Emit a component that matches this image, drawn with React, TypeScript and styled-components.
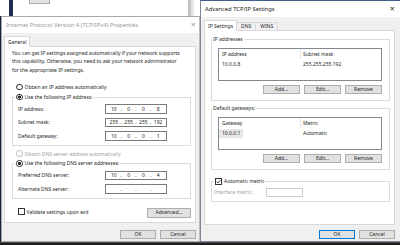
import React from 'react';
import styled, { createGlobalStyle } from 'styled-components';

const GlobalStyle = createGlobalStyle`
  html, body {
    margin: 0;
    padding: 0;
    background: #14233b;
  }
  body {
    font-family: 'Noto Sans', 'Liberation Sans', sans-serif;
    font-size: 5px;
    color: #262626;
  }
  * {
    box-sizing: border-box;
  }
`;

const Screen = styled.div`
  width: 400px;
  height: 245px;
  overflow: hidden;
  display: flex;
  flex-direction: column;
  background: #14233b;
`;

const Desktop = styled.div`
  flex: 1;
  min-height: 0;
  display: flex;
`;

const Taskbar = styled.div`
  height: 3px;
  background: #1e1e1e;
  border-top: 1px solid #4a4a4a;
`;

const LeftColumn = styled.div`
  width: 200px;
  display: flex;
  flex-direction: column;
`;

// the window peeking out behind the IPv4 dialog
const BackWindow = styled.div`
  height: 16px;
  display: flex;
  background: #fff;
`;

const BackEdge = styled.div<{ $width: number; $color: string }>`
  width: ${p => p.$width}px;
  background: ${p => p.$color};
`;

const BackPane = styled.div`
  flex: 1;
  padding-left: 16px;
`;

const BackButton = styled.div`
  width: 21px;
  height: 4px;
  background: #e1e1e1;
  border: 1px solid #adadad;
  border-top: none;
`;

const DialogSlot = styled.div`
  flex: 1;
  min-height: 0;
  display: flex;
  padding-left: 1px;
`;

const Window = styled.div<{ $active?: boolean; $width?: number }>`
  ${p => (p.$width ? `width: ${p.$width}px;` : 'flex: 1;')}
  min-height: 0;
  display: flex;
  flex-direction: column;
  background: #f0f0f0;
  border: 1px solid ${p => (p.$active ? '#7d8796' : '#a9a9a9')};
  border-right: ${p => (p.$active ? 'none' : '1px solid #bdbdbd')};
  border-top-color: ${p => (p.$active ? '#3d5f8c' : '#a9a9a9')};
`;

const TitleBar = styled.div<{ $active?: boolean; $closeInset: number }>`
  height: 16px;
  flex-shrink: 0;
  display: flex;
  align-items: center;
  justify-content: space-between;
  padding: 0 ${p => p.$closeInset}px 0 4px;
  background: #fff;
  font-size: 5.8px;
  color: ${p => (p.$active ? '#1a1a1a' : '#9a9a9a')};
`;

const CloseGlyph = styled.span`
  font-family: 'DejaVu Sans', sans-serif;
  font-size: 6.5px;
  line-height: 1;
`;

const WindowBody = styled.div<{ $pad: string }>`
  flex: 1;
  min-height: 0;
  display: flex;
  flex-direction: column;
  padding: ${p => p.$pad};
`;

const TabStrip = styled.div`
  display: flex;
  align-items: flex-end;
  height: 11px;
  margin-bottom: -1px;
  position: relative;
  z-index: 1;
`;

const Tab = styled.div<{ $selected?: boolean }>`
  height: ${p => (p.$selected ? 11 : 9.5)}px;
  padding: 0 ${p => (p.$selected ? 3 : 4)}px;
  display: flex;
  align-items: center;
  background: ${p => (p.$selected ? '#fff' : '#f0f0f0')};
  border: 1px solid #d9d9d9;
  border-bottom-color: ${p => (p.$selected ? '#fff' : '#d9d9d9')};
  & + & {
    margin-left: -1px;
  }
`;

const TabPanel = styled.div<{ $pad: string }>`
  flex: 1;
  min-height: 0;
  display: flex;
  flex-direction: column;
  background: #fff;
  border: 1px solid #d9d9d9;
  padding: ${p => p.$pad};
`;

const Footer = styled.div<{ $top: number }>`
  display: flex;
  justify-content: flex-end;
  gap: 4px;
  padding-top: ${p => p.$top}px;
`;

const PushButton = styled.button<{ $width: number; $default?: boolean }>`
  width: ${p => p.$width}px;
  height: 9.5px;
  padding: 0;
  font: inherit;
  line-height: 1;
  color: #262626;
  background: #e1e1e1;
  border: 1px solid ${p => (p.$default ? '#0078d7' : '#adadad')};
  display: flex;
  align-items: center;
  justify-content: center;
`;

const Intro = styled.p`
  margin: 0;
  line-height: 8.5px;
  white-space: pre;
`;

const OptionRow = styled.label<{ $disabled?: boolean; $indent?: number; $top?: number }>`
  display: flex;
  align-items: center;
  gap: 2px;
  height: 9px;
  margin-left: ${p => p.$indent ?? 0}px;
  margin-top: ${p => p.$top ?? 0}px;
  color: ${p => (p.$disabled ? '#a3a3a3' : 'inherit')};
  white-space: nowrap;
`;

const RadioDot = styled.span<{ $checked?: boolean; $disabled?: boolean }>`
  width: 6.5px;
  height: 6.5px;
  flex-shrink: 0;
  border-radius: 50%;
  border: 1px solid ${p => (p.$disabled ? '#bdbdbd' : '#333')};
  background: ${p =>
    p.$checked ? 'radial-gradient(circle, #222 0 1.3px, #fff 1.8px)' : '#fff'};
`;

const CheckSquare = styled.span`
  width: 7px;
  height: 7px;
  flex-shrink: 0;
  border: 1px solid #333;
  background: #fff;
  display: flex;
  align-items: center;
  justify-content: center;
`;

const GroupBox = styled.fieldset<{ $pad: string; $top?: number }>`
  margin: ${p => p.$top ?? 0}px 0 0 0;
  min-width: 0;
  border: 1px solid #dcdcdc;
  padding: ${p => p.$pad};
`;

const GroupLegend = styled.legend<{ $shift: number }>`
  padding: 0 1px;
  margin-left: ${p => p.$shift}px;
  height: 9px;
  line-height: 9px;
  white-space: nowrap;
`;

const FieldGrid = styled.div<{ $labelWidth: number }>`
  display: grid;
  grid-template-columns: ${p => p.$labelWidth}px auto;
  justify-content: start;
  align-items: center;
  row-gap: 4px;
`;

const FieldLabel = styled.span<{ $disabled?: boolean; $width?: number }>`
  ${p => (p.$width ? `width: ${p.$width}px;` : '')}
  color: ${p => (p.$disabled ? '#a3a3a3' : 'inherit')};
  white-space: nowrap;
`;

const IpBox = styled.div`
  width: 62px;
  height: 9.5px;
  border: 1px solid #7a7a7a;
  background: #fff;
  display: flex;
  align-items: center;
  padding: 0 2px;
`;

const Octet = styled.span`
  flex: 1;
  text-align: center;
`;

const Dot = styled.span`
  width: 3px;
  text-align: center;
`;

const TextBox = styled.div<{ $width: number; $disabled?: boolean }>`
  width: ${p => p.$width}px;
  height: 9.5px;
  background: #fff;
  border: 1px solid ${p => (p.$disabled ? '#cccccc' : '#7a7a7a')};
`;

const BottomRow = styled.div`
  margin-top: 9.5px;
  display: flex;
  justify-content: space-between;
  align-items: flex-start;
  padding-left: 6px;
`;

const CheckOption = styled.label`
  display: flex;
  align-items: center;
  gap: 1.5px;
  height: 6px;
  margin-top: 0.5px;
  white-space: nowrap;
`;

const ListBox = styled.div`
  height: 33px;
  background: #fff;
  border: 1px solid #828790;
  display: flex;
  flex-direction: column;
`;

const ListRow = styled.div<{ $header?: boolean }>`
  display: grid;
  grid-template-columns: 81px 1fr;
  height: ${p => (p.$header ? 10 : 9)}px;
  margin-bottom: ${p => (p.$header ? 1 : 0)}px;
`;

const ListCell = styled.div<{ $divider?: boolean; $inset?: number }>`
  display: flex;
  align-items: center;
  border-left: ${p => (p.$divider ? '1px solid #e5e5e5' : 'none')};
  padding-left: ${p => p.$inset ?? 0}px;
  white-space: nowrap;
`;

const CellText = styled.span<{ $selected?: boolean }>`
  height: 100%;
  display: flex;
  align-items: center;
  padding: 0 3px;
  background: ${p => (p.$selected ? '#e8e8e8' : 'transparent')};
`;

const ActionRow = styled.div`
  margin-top: 4px;
  display: flex;
  justify-content: flex-end;
  gap: 4px;
`;

const MetricRow = styled.div`
  display: flex;
  align-items: center;
`;

const Radio = ({ checked, disabled }: { checked?: boolean; disabled?: boolean }) => (
  <RadioDot $checked={checked} $disabled={disabled} />
);

const Checkbox = ({ checked }: { checked?: boolean }) => (
  <CheckSquare>
    {checked && (
      <svg width="5" height="5" viewBox="0 0 10 10">
        <path d="M1.2 5.2 L4 8 L8.8 2.2" stroke="#222" strokeWidth="1.7" fill="none" />
      </svg>
    )}
  </CheckSquare>
);

const IpField = ({ octets }: { octets: string[] }) => (
  <IpBox>
    {octets.map((o, i) => (
      <React.Fragment key={i}>
        {i > 0 && <Dot>.</Dot>}
        <Octet>{o}</Octet>
      </React.Fragment>
    ))}
  </IpBox>
);

interface ListProps {
  columns: [string, string];
  row: [string, string];
  selected?: boolean;
}

const ListView = ({ columns, row, selected }: ListProps) => (
  <ListBox>
    <ListRow $header>
      <ListCell>
        <CellText>{columns[0]}</CellText>
      </ListCell>
      <ListCell $divider $inset={2}>
        {columns[1]}
      </ListCell>
    </ListRow>
    <ListRow>
      <ListCell>
        <CellText $selected={selected}>{row[0]}</CellText>
      </ListCell>
      <ListCell $inset={3}>{row[1]}</ListCell>
    </ListRow>
  </ListBox>
);

const ListActions = () => (
  <ActionRow>
    <PushButton $width={37}>Add...</PushButton>
    <PushButton $width={37}>Edit...</PushButton>
    <PushButton $width={37}>Remove</PushButton>
  </ActionRow>
);

const Ipv4Dialog = () => (
  <Window>
    <TitleBar $closeInset={3}>
      <span>Internet Protocol Version 4 (TCP/IPv4) Properties</span>
      <CloseGlyph>✕</CloseGlyph>
    </TitleBar>
    <WindowBody $pad="3px 3px 2px 2px">
      <TabStrip>
        <Tab $selected>General</Tab>
      </TabStrip>
      <TabPanel $pad="1.75px 4px 0 7px">
        <Intro>
          {'You can get IP settings assigned automatically if your network supports\nthis capability. Otherwise, you need to ask your network administrator\nfor the appropriate IP settings.'}
        </Intro>
        <OptionRow $indent={4} $top={8.25}>
          <Radio />
          Obtain an IP address automatically
        </OptionRow>
        <GroupBox $pad="2.5px 0 4px 5px" $top={1}>
          <GroupLegend $shift={-3}>
            <OptionRow>
              <Radio checked />
              Use the following IP address:
            </OptionRow>
          </GroupLegend>
          <FieldGrid $labelWidth={87}>
            <FieldLabel>IP address:</FieldLabel>
            <IpField octets={['10', '0', '0', '8']} />
            <FieldLabel>Subnet mask:</FieldLabel>
            <IpField octets={['255', '255', '255', '192']} />
            <FieldLabel>Default gateway:</FieldLabel>
            <IpField octets={['10', '0', '0', '1']} />
          </FieldGrid>
        </GroupBox>
        <OptionRow $indent={4} $top={3.5} $disabled>
          <Radio disabled />
          Obtain DNS server address automatically
        </OptionRow>
        <GroupBox $pad="2.5px 0 4px 5px" $top={1}>
          <GroupLegend $shift={-3}>
            <OptionRow>
              <Radio checked />
              Use the following DNS server addresses:
            </OptionRow>
          </GroupLegend>
          <FieldGrid $labelWidth={87}>
            <FieldLabel>Preferred DNS server:</FieldLabel>
            <IpField octets={['10', '0', '0', '4']} />
            <FieldLabel>Alternate DNS server:</FieldLabel>
            <IpField octets={['', '', '', '']} />
          </FieldGrid>
        </GroupBox>
        <BottomRow>
          <CheckOption>
            <Checkbox />
            Validate settings upon exit
          </CheckOption>
          <PushButton $width={44}>Advanced...</PushButton>
        </BottomRow>
      </TabPanel>
      <Footer $top={6.5}>
        <PushButton $width={36}>OK</PushButton>
        <PushButton $width={36}>Cancel</PushButton>
      </Footer>
    </WindowBody>
  </Window>
);

const AdvancedDialog = () => (
  <Window $active $width={200}>
    <TitleBar $active $closeInset={5}>
      <span>Advanced TCP/IP Settings</span>
      <CloseGlyph>✕</CloseGlyph>
    </TitleBar>
    <WindowBody $pad="3px 5px 2px 3px">
      <TabStrip>
        <Tab $selected>IP Settings</Tab>
        <Tab>DNS</Tab>
        <Tab>WINS</Tab>
      </TabStrip>
      <TabPanel $pad="3.5px 4px 0 6px">
        <GroupBox $pad="4px 7px 6px 6px">
          <GroupLegend $shift={-6}>IP addresses</GroupLegend>
          <ListView columns={['IP address', 'Subnet mask']} row={['10.0.0.8', '255.255.255.192']} />
          <ListActions />
        </GroupBox>
        <GroupBox $pad="4px 7px 6px 6px" $top={2.5}>
          <GroupLegend $shift={-6}>Default gateways:</GroupLegend>
          <ListView columns={['Gateway', 'Metric']} row={['10.0.0.1', 'Automatic']} selected />
          <ListActions />
        </GroupBox>
        <GroupBox $pad="2px 0 4px 2px" $top={6.5}>
          <GroupLegend $shift={0}>
            <OptionRow>
              <Checkbox checked />
              Automatic metric
            </OptionRow>
          </GroupLegend>
          <MetricRow>
            <FieldLabel $disabled $width={52}>
              Interface metric:
            </FieldLabel>
            <TextBox $width={37} $disabled />
          </MetricRow>
        </GroupBox>
      </TabPanel>
      <Footer $top={4.5}>
        <PushButton $width={36} $default>
          OK
        </PushButton>
        <PushButton $width={36}>Cancel</PushButton>
      </Footer>
    </WindowBody>
  </Window>
);

export default function App() {
  return (
    <>
      <GlobalStyle />
      <Screen>
        <Desktop>
          <LeftColumn>
            <BackWindow>
              <BackEdge $width={9} $color="#ffffff" />
              <BackEdge $width={4} $color="#1c2e4c" />
              <BackPane>
                <BackButton />
              </BackPane>
              <BackEdge $width={3} $color="#c4c4c4" />
              <BackEdge $width={3} $color="#e6e6e6" />
              <BackEdge $width={6} $color="#ffffff" />
            </BackWindow>
            <DialogSlot>
              <Ipv4Dialog />
            </DialogSlot>
          </LeftColumn>
          <AdvancedDialog />
        </Desktop>
        <Taskbar />
      </Screen>
    </>
  );
}
